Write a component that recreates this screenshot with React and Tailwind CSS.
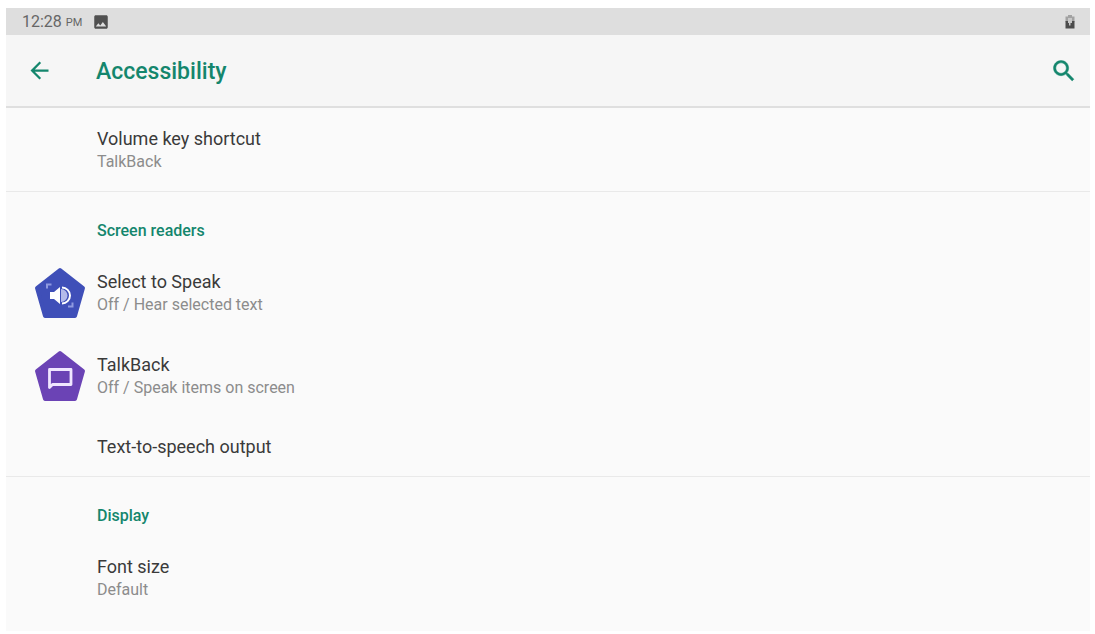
import React from 'react';

// Rounded pentagon behind the service icons
function Pentagon({ className, children }) {
  return (
    <svg viewBox="0 0 52 52" className={className} aria-hidden="true">
      <path
        d="M26 3 L49 21 L41 49 L11 49 L3 21 Z"
        fill="currentColor"
        stroke="currentColor"
        strokeWidth="4"
        strokeLinejoin="round"
      />
      {children}
    </svg>
  );
}

function SelectToSpeakIcon() {
  return (
    <Pentagon className="size-[52px] text-[#3f4fb8]">
      <path d="M16 25 h4 l6 -5 v17 l-6 -5 h-4 z" fill="#fff" />
      <path d="M27 22 a6.500 6.500 0 0 1 0 13 z" fill="#b4bbea" />
      <path d="M28 20.500 a8 8 0 0 1 0 16" fill="none" stroke="#fff" strokeWidth="2" />
      <path d="M13 21.500 v-4 h4.500" fill="none" stroke="#8f9ae0" strokeWidth="2" />
      <path d="M38.500 35.500 v4 h-4.500" fill="none" stroke="#8f9ae0" strokeWidth="2" />
    </Pentagon>
  );
}

function TalkBackIcon() {
  return (
    <Pentagon className="size-[52px] text-[#6b43b5]">
      <path
        d="M15.500 37.500 V19.500 h21.500 v15 H18.500 z"
        fill="none"
        stroke="#f0e6ff"
        strokeWidth="2.800"
        strokeLinejoin="round"
      />
    </Pentagon>
  );
}

const sections = [
  {
    items: [{ title: 'Volume key shortcut', summary: 'TalkBack' }],
  },
  {
    title: 'Screen readers',
    items: [
      { title: 'Select to Speak', summary: 'Off / Hear selected text', icon: SelectToSpeakIcon },
      { title: 'TalkBack', summary: 'Off / Speak items on screen', icon: TalkBackIcon },
      { title: 'Text-to-speech output' },
    ],
  },
  {
    title: 'Display',
    items: [{ title: 'Font size', summary: 'Default' }],
  },
];

function StatusBar() {
  return (
    <div className="flex h-[27px] items-center bg-[#dedede] pr-[14px] pl-4 text-[#666]">
      <span className="text-base">12:28</span>
      <span className="ml-1 pt-1 text-[11px]">PM</span>
      <svg viewBox="0 0 24 24" className="ml-[10px] size-[18px]" fill="#505050" aria-hidden="true">
        <path d="M21 19V5c0-1.100-.9-2-2-2H5c-1.100 0-2 .9-2 2v14c0 1.100.9 2 2 2h14c1.100 0 2-.9 2-2zM8.500 13.500l2.500 3.010L14.500 12l4.500 6H5l3.500-4.500z" />
      </svg>
      <svg viewBox="0 0 12 16" className="ml-auto h-4 w-3" aria-hidden="true">
        <path d="M4 1h4v1.500h2.500V8h-9V2.500H4z" fill="#a2a2a2" />
        <path d="M1.500 7h9v7.500h-9z" fill="#4c4c4c" />
        <path d="M4 4h4v5H6.500v2.500H5V9H4z" fill="#c8c8c8" />
      </svg>
    </div>
  );
}

function Header() {
  return (
    <header className="flex h-[73px] items-center border-b-2 border-[#dfdfdf] bg-[#f6f6f6] pr-3 pl-5 text-[#14866d]">
      <button type="button" aria-label="Navigate up" className="w-[70px]">
        <svg viewBox="0 0 24 24" className="size-[27px]" fill="currentColor" aria-hidden="true">
          <path d="M20 11H7.830l5.590-5.590L12 4l-8 8 8 8 1.410-1.410L7.830 13H20v-2z" />
        </svg>
      </button>
      <h1 className="flex-1 pt-1 text-[23px] font-medium">Accessibility</h1>
      <button type="button" aria-label="Search">
        <svg viewBox="0 0 24 24" className="size-7" fill="currentColor" stroke="currentColor" strokeWidth="0.400" aria-hidden="true">
          <path d="M15.500 14h-.790l-.280-.270C15.410 12.590 16 11.110 16 9.500 16 5.910 13.090 3 9.500 3S3 5.910 3 9.500 5.910 16 9.500 16c1.610 0 3.090-.590 4.230-1.570l.270.280v.790l5 4.990L20.490 19l-4.990-5zm-6 0C7.010 14 5 11.990 5 9.500S7.010 5 9.500 5 14 7.010 14 9.500 11.990 14 9.500 14z" />
        </svg>
      </button>
    </header>
  );
}

function Preference({ item }) {
  const Icon = item.icon;
  return (
    <li>
      <button
        type="button"
        className={
          item.summary
            ? 'flex h-[83px] w-full items-center text-left'
            : 'flex h-[59px] w-full items-center text-left'
        }
      >
        <span className="w-[91px] shrink-0 pl-7">{Icon && <Icon />}</span>
        <span className="flex flex-col">
          <span className="text-lg leading-6 text-[#3a3a3a]">{item.title}</span>
          {item.summary && (
            <span className="text-base leading-[22px] text-[#8c8c8c]">{item.summary}</span>
          )}
        </span>
      </button>
    </li>
  );
}

function App() {
  return (
    <div className="min-h-screen bg-white pt-2 pr-[5px] pl-[6px] font-[Roboto,sans-serif]">
      <StatusBar />
      <Header />
      <main className="divide-y divide-[#e9e9e9] bg-[#fafafa] pb-3">
        {sections.map((section, index) => (
          <section key={index}>
            {section.title && (
              <h2 className="flex h-[59px] items-center pt-[18px] pl-[91px] text-base font-medium text-[#14866d]">
                {section.title}
              </h2>
            )}
            <ul>
              {section.items.map((item) => (
                <Preference key={item.title} item={item} />
              ))}
            </ul>
          </section>
        ))}
      </main>
    </div>
  );
}

export default App;
